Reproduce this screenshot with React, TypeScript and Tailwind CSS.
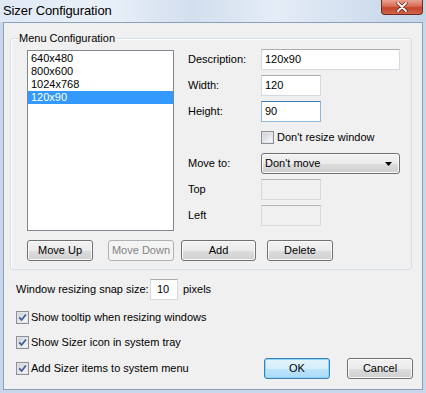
import React from "react";

const btn =
  "h-[21px] flex items-center justify-center border border-[#707070] rounded-[3px] bg-[linear-gradient(to_bottom,#f2f2f2_0%,#ebebeb_50%,#dddddd_51%,#cfcfcf_100%)] shadow-[inset_0_0_0_1px_#fbfbfb]";
const combo =
  "h-[21px] flex items-center justify-between border border-[#707070] rounded-[3px] bg-[linear-gradient(to_bottom,#f2f2f2_0%,#ebebeb_50%,#dddddd_51%,#cfcfcf_100%)] shadow-[inset_0_0_0_1px_#fbfbfb]";
const btnDisabled =
  "h-[21px] flex items-center justify-center border border-[#adb2b5] rounded-[3px] bg-[#f4f4f4] text-[#838383]";
const input =
  "h-[21px] bg-white border border-[#d5d9e0] border-t-[#abadb3] flex items-center pl-[3px]";

function Check({ checked }: { checked?: boolean }) {
  return (
    <span className="w-[13px] h-[13px] border border-[#8f8f8f] bg-[#f4f4f4] flex items-center justify-center shrink-0">
      <span className="w-[11px] h-[11px] border border-[#e2e5e9] bg-[linear-gradient(135deg,#cdd2d8,#f7f8f9)] flex items-center justify-center">
        {checked && (
          <svg width="9" height="9" viewBox="0 0 9 9">
            <path d="M1.2 4.3 L3.6 6.9 L7.9 1.4" stroke="#3e5b99" strokeWidth="1.7" fill="none" />
          </svg>
        )}
      </span>
    </span>
  );
}

export default function App() {
  return (
    <div className="w-[426px] h-[393px] overflow-hidden flex flex-col bg-[#c8d8ea] text-[11px] text-black font-['Liberation_Sans',Arial,sans-serif] leading-none">
      {/* Title bar */}
      <div className="h-[22px] flex items-start justify-between pl-[3px] pr-[3px] bg-[linear-gradient(to_right,#dfe9f5_0%,#e9f0f8_25%,#d2dfee_45%,#e4ecf6_65%,#c3d5e9_100%)]">
        <span className="text-[13px] mt-[4px] tracking-[-0.1px]">Sizer Configuration</span>
        <div className="w-[42px] h-[15px] rounded-b-[4px] border border-t-0 border-[#6e2a1c] bg-[linear-gradient(to_bottom,#e7a292_0%,#d86b53_45%,#c5442a_55%,#d0654a_100%)] flex items-center justify-center">
          <svg width="12" height="10" viewBox="0 0 12 10">
            <path d="M2 1 L10 9 M10 1 L2 9" stroke="#5a2418" strokeWidth="3.2" strokeLinecap="round" />
            <path d="M2 1 L10 9 M10 1 L2 9" stroke="#ffffff" strokeWidth="1.8" strokeLinecap="round" />
          </svg>
        </div>
      </div>

      {/* Client area */}
      <div className="ml-[3px] w-[420px] h-[368px] border border-[#8aa0ba] bg-[#f0f0f0] flex flex-col">
        {/* Group box */}
        <div className="relative ml-[6px] mt-[15px] w-[402px] h-[232px] border border-[#d5dfe5] rounded-[3px] shadow-[inset_1px_1px_0_#ffffff] flex pl-[16px] pt-[10px]">
          <span className="absolute -top-[6px] left-[7px] px-[1px] bg-[#f0f0f0]">Menu Configuration</span>

          {/* Left column */}
          <div className="flex flex-col w-[147px] mt-[1px]">
            <div className="h-[181px] bg-white border border-[#828790] pt-[1px] flex flex-col">
              <div className="h-[13px] flex items-center pl-[3px]">640x480</div>
              <div className="h-[13px] flex items-center pl-[3px]">800x600</div>
              <div className="h-[13px] flex items-center pl-[3px]">1024x768</div>
              <div className="h-[13px] flex items-center pl-[3px] bg-[#3399ff] text-white">120x90</div>
            </div>
            <div className="flex mt-[9px] gap-[15px]">
              <div className={`${btn} w-[66px]`}>Move Up</div>
              <div className={`${btnDisabled} w-[66px]`}>Move Down</div>
            </div>
          </div>

          {/* Right column */}
          <div className="flex flex-col ml-[7px]">
            <div className="flex items-center">
              <span className="w-[80px] pl-[7px]">Description:</span>
              <div className={`${input} w-[139px]`}>120x90</div>
            </div>
            <div className="flex items-center mt-[5px]">
              <span className="w-[80px] pl-[7px]">Width:</span>
              <div className={`${input} w-[60px]`}>120</div>
            </div>
            <div className="flex items-center mt-[5px]">
              <span className="w-[80px] pl-[7px]">Height:</span>
              <div className="h-[21px] w-[60px] bg-white border border-[#8fb6dc] border-t-[#3d7bad] flex items-center pl-[3px]">90</div>
            </div>
            <div className="flex items-center mt-[9px] pl-[80px]">
              <Check />
              <span className="ml-[3px]">Don't resize window</span>
            </div>
            <div className="flex items-center mt-[9px]">
              <span className="w-[80px] pl-[7px]">Move to:</span>
              <div className={`${combo} w-[139px] pl-[3px] pr-[7px]`}>
                <span>Don't move</span>
                <svg width="7" height="4" viewBox="0 0 7 4">
                  <path d="M0 0 H7 L3.5 4 Z" fill="#000" />
                </svg>
              </div>
            </div>
            <div className="flex items-center mt-[5px]">
              <span className="w-[80px] pl-[7px]">Top</span>
              <div className="h-[21px] w-[60px] bg-[#f0f0f0] border border-[#d9d9d9] border-t-[#b5b5b5]" />
            </div>
            <div className="flex items-center mt-[5px]">
              <span className="w-[80px] pl-[7px]">Left</span>
              <div className="h-[21px] w-[60px] bg-[#f0f0f0] border border-[#d9d9d9] border-t-[#b5b5b5]" />
            </div>
            <div className="flex mt-[14px] gap-[11px]">
              <div className={`${btn} w-[75px]`}>Add</div>
              <div className={`${btn} w-[66px]`}>Delete</div>
            </div>
          </div>
        </div>

        {/* Bottom section */}
        <div className="flex-1 flex justify-between pl-[12px] pr-[9px] pt-[9px] pb-[10px]">
          <div className="flex flex-col">
            <div className="flex items-center">
              <span className="w-[134px]">Window resizing snap size:</span>
              <div className={`${input} w-[28px] pl-[6px]`}>10</div>
              <span className="ml-[5px]">pixels</span>
            </div>
            <div className="flex items-center mt-[11px]">
              <Check checked />
              <span className="ml-[2px]">Show tooltip when resizing windows</span>
            </div>
            <div className="flex items-center mt-[12px]">
              <Check checked />
              <span className="ml-[2px]">Show Sizer icon in system tray</span>
            </div>
            <div className="flex items-center mt-[13px]">
              <Check checked />
              <span className="ml-[2px]">Add Sizer items to system menu</span>
            </div>
          </div>
          <div className="flex items-end gap-[17px]">
            <div className="h-[21px] w-[66px] flex items-center justify-center border border-[#3c7fb1] rounded-[3px] bg-[linear-gradient(to_bottom,#e5f4fc_0%,#d4eefb_50%,#bde5fc_51%,#a9daf5_100%)] shadow-[inset_0_0_0_1px_#8cd6fb]">
              OK
            </div>
            <div className={`${btn} w-[66px]`}>Cancel</div>
          </div>
        </div>
      </div>
    </div>
  );
}
